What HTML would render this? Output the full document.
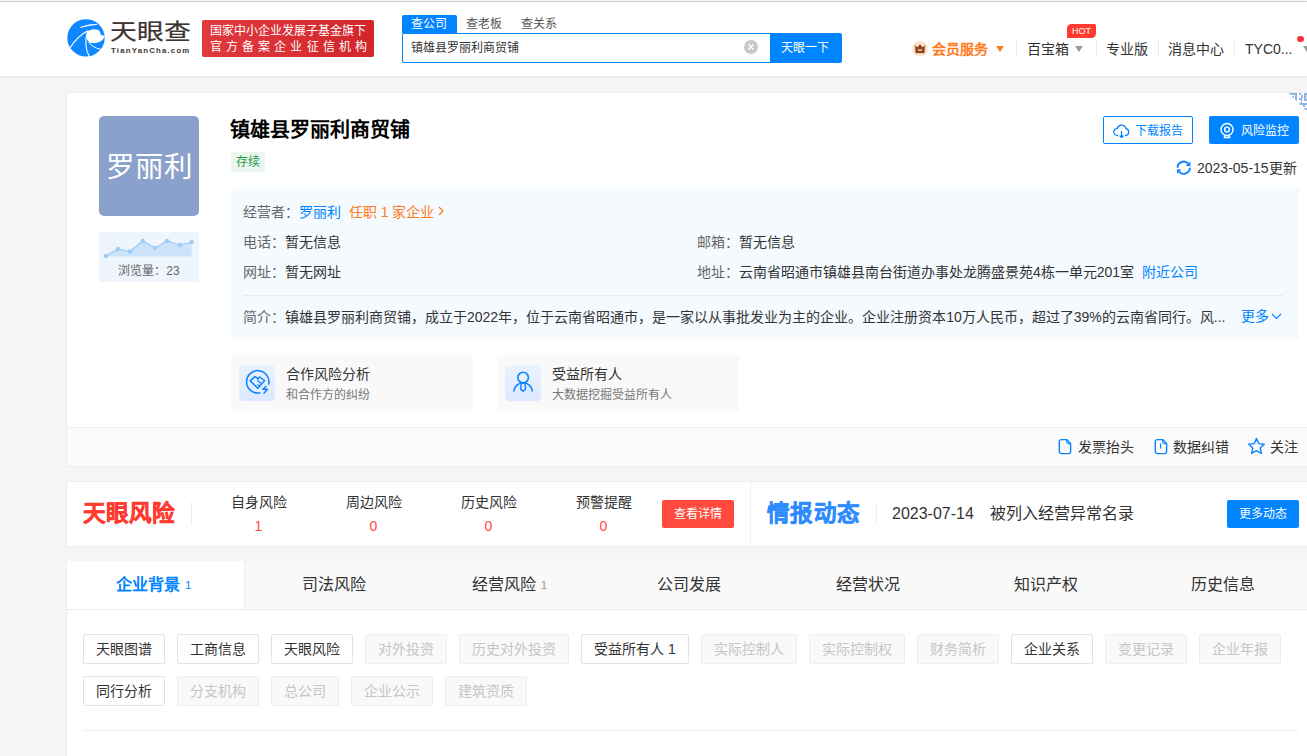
<!DOCTYPE html>
<html lang="zh-CN"><head><meta charset="utf-8">
<style>
*{box-sizing:border-box;margin:0;padding:0}
html,body{width:1307px;height:756px;overflow:hidden}
body{background:#f5f5f5;font-family:"Liberation Sans",sans-serif;color:#333;position:relative}
.abs{position:absolute}
.nw{white-space:nowrap}
#topline{left:0;top:1px;width:1307px;height:1px;background:#cfcfcf}
#header{left:0;top:2px;width:1307px;height:74px;background:#fff;box-shadow:0 1px 3px rgba(0,0,0,.08)}
.card{background:#fff;border:1px solid #eeeeee}
</style></head>
<body>
<div class="abs" style="left:0;top:0;width:1307px;height:1px;background:#fafafa"></div>
<div id="topline" class="abs"></div>
<div id="header" class="abs">
  <svg class="abs" style="left:62px;top:12px" width="50" height="48" viewBox="0 0 50 48">
    <circle cx="24" cy="23.9" r="18.7" fill="#0f88ff"/>
    <path d="M25.4 17.3 Q31 14.2 35.8 15.8 Q38.9 17.6 38.7 20.8 L42.8 22 Q41.6 26.6 35.8 28.5 Q30.5 29.8 27.3 28.2 Q24.6 26.2 24.6 23 Q24.8 19.5 25.4 17.3 Z" fill="#fff"/>
    <path d="M8.2 33.8 Q15 22.5 25.8 16.8" stroke="#fff" stroke-width="1.2" fill="none"/>
    <path d="M25.6 16.8 Q23.6 23 23.8 30 Q24.2 37 27.4 42.8" stroke="#fff" stroke-width="1.1" fill="none"/>
    <path d="M26.2 27.4 Q30 33.5 38.8 35.4" stroke="#fff" stroke-width="1" fill="none"/>
    <path d="M18.6 13.4 Q26 10.2 35 10.3 Q27 11.4 18.6 13.4 Z" stroke="#fff" stroke-width="0.7" fill="#fff"/>
  </svg>
  <div class="abs nw" style="left:110px;top:18.3px;font-size:26.8px;line-height:30px;color:#3d3532;-webkit-text-stroke:0.3px #3d3532;transform:scaleY(0.81);transform-origin:0 0;letter-spacing:0px">天眼查</div>
  <div class="abs nw" style="left:111px;top:43.5px;font-size:7.8px;line-height:10px;font-weight:bold;color:#3d3532;letter-spacing:1.2px">TianYanCha.com</div>
  <div class="abs" style="left:202px;top:18px;width:172px;height:37px;background:linear-gradient(90deg,#e03a3e,#d2262b);border-radius:2px"></div>
  <div class="abs nw" style="left:210px;top:21px;font-size:12px;line-height:16px;color:#fff">国家中小企业发展子基金旗下</div>
  <div class="abs nw" style="left:210px;top:37px;font-size:12px;line-height:16px;color:#fff;letter-spacing:4.1px">官方备案企业征信机构</div>

  <div class="abs" style="left:402px;top:13px;width:55px;height:18px;background:#0084ff;border-radius:2px 2px 0 0"></div>
  <div class="abs nw" style="left:411px;top:13px;font-size:12px;line-height:18px;color:#fff">查公司</div>
  <div class="abs nw" style="left:466px;top:13px;font-size:12px;line-height:18px;color:#555">查老板</div>
  <div class="abs nw" style="left:521px;top:13px;font-size:12px;line-height:18px;color:#555">查关系</div>
  <div class="abs" style="left:402px;top:31px;width:370px;height:30px;border:1px solid #0084ff;border-right:none;border-radius:2px 0 0 2px;background:#fff"></div>
  <div class="abs nw" style="left:411px;top:37px;font-size:12px;line-height:18px;color:#333">镇雄县罗丽利商贸铺</div>
  <svg class="abs" style="left:744px;top:38px" width="14" height="14" viewBox="0 0 14 14"><circle cx="7" cy="7" r="7" fill="#c8c8c8"/><path d="M4.3 4.3 L9.7 9.7 M9.7 4.3 L4.3 9.7" stroke="#fff" stroke-width="1.3"/></svg>
  <div class="abs" style="left:770px;top:31px;width:72px;height:30px;background:#0084ff;border-radius:0 2px 2px 0"></div>
  <div class="abs nw" style="left:781px;top:37px;font-size:12px;line-height:18px;color:#fff">天眼一下</div>

  <svg class="abs" style="left:912px;top:39px" width="16" height="16" viewBox="0 0 16 16"><circle cx="8" cy="7.9" r="7.9" fill="#fde4d1"/><path d="M3.1 4.6 L5.4 6.6 L8 3.5 L10.6 6.6 L12.9 4.6 L12.2 11.9 L3.8 11.9 Z" fill="#8e4513" stroke="#8e4513" stroke-width="0.4" stroke-linejoin="round"/><path d="M6.2 8 Q8 11.2 9.8 8" stroke="#fde4d1" stroke-width="1.1" fill="none"/></svg>
  <div class="abs nw" style="left:932px;top:36.5px;font-size:14px;line-height:20px;color:#ff7a1b;font-weight:bold">会员服务</div>
  <div class="abs" style="left:996px;top:43.5px;width:0;height:0;border-left:4.5px solid transparent;border-right:4.5px solid transparent;border-top:6px solid #ff7a1b"></div>
  <div class="abs" style="left:1016px;top:39px;width:1px;height:14px;background:#e8e8e8"></div>
  <div class="abs nw" style="left:1027px;top:36.5px;font-size:14px;line-height:20px;color:#333">百宝箱</div>
  <div class="abs" style="left:1075px;top:43.5px;width:0;height:0;border-left:4.5px solid transparent;border-right:4.5px solid transparent;border-top:6px solid #999"></div>
  <div class="abs" style="left:1067px;top:22px;width:29px;height:14px;background:#ff3a30;border-radius:4.5px 1.5px 4.5px 0"></div>
  <div class="abs nw" style="left:1067px;top:22px;width:29px;text-align:center;font-size:9px;line-height:14px;color:#fff">HOT</div>
  <div class="abs" style="left:1096px;top:39px;width:1px;height:14px;background:#e8e8e8"></div>
  <div class="abs nw" style="left:1106px;top:36.5px;font-size:14px;line-height:20px;color:#333">专业版</div>
  <div class="abs" style="left:1158px;top:39px;width:1px;height:14px;background:#e8e8e8"></div>
  <div class="abs nw" style="left:1168px;top:36.5px;font-size:14px;line-height:20px;color:#333">消息中心</div>
  <div class="abs" style="left:1234px;top:39px;width:1px;height:14px;background:#e8e8e8"></div>
  <div class="abs nw" style="left:1245px;top:36.5px;font-size:14px;line-height:20px;color:#333">TYC0...</div>
  <div class="abs" style="left:1297px;top:33.5px;width:6.5px;height:6.5px;border-radius:3.25px;background:#f5333f"></div>
  <div class="abs" style="left:1302.5px;top:44px;width:0;height:0;border-left:4.5px solid transparent;border-right:4.5px solid transparent;border-top:6px solid #999"></div>
</div>

<!-- main card -->
<div class="abs card" style="left:66px;top:92px;width:1251px;height:375px;"></div>
<div class="abs" style="left:67px;top:427px;width:1250px;height:39px;background:#fbfbfb;border-top:1px solid #efefef"></div>
<svg class="abs" style="left:1280px;top:88px" width="27" height="27" viewBox="0 0 27 27" shape-rendering="crispEdges">
  <defs><clipPath id="qc"><polygon points="8.6,5 27,5 27,23.5"/></clipPath></defs>
  <g fill="#8cb6e8" clip-path="url(#qc)">
  <rect x="8" y="5" width="9" height="1.8"/><rect x="15.3" y="5" width="1.6" height="8"/><rect x="11.8" y="7.9" width="2" height="2"/>
  <rect x="18.9" y="5" width="2.2" height="1.8"/><rect x="21" y="6.5" width="1.9" height="3"/><rect x="19.3" y="9.5" width="2.2" height="2.8"/><rect x="20.5" y="12" width="1.8" height="3"/>
  <rect x="24.3" y="5" width="2.7" height="7.5"/>
  <rect x="19.3" y="15" width="7.7" height="1.8"/><rect x="22.9" y="16.8" width="2.1" height="1.8"/><rect x="24.3" y="20" width="2.7" height="1.5"/>
  </g>
  <rect x="25.8" y="6.5" width="1.2" height="4.5" fill="#dff0ea"/>
</svg>
<div class="abs" style="left:99px;top:116px;width:100px;height:100px;background:#8aa1cc;border-radius:5px"></div>
<div class="abs nw" style="left:99px;top:117px;width:100px;text-align:center;font-size:28.5px;line-height:100px;color:#fff">罗丽利</div>
<div class="abs" style="left:99px;top:232px;width:100px;height:50px;background:#eef5fd"></div>
<svg class="abs" style="left:99px;top:232px" width="100" height="50" viewBox="0 0 100 50">
  <path d="M7 24 L19 17 L31 19.5 L43.7 9 L56 16 L68 9 L81 13 L92.6 10 L92.6 24.5 L7 24.5 Z" fill="#cce3fb"/>
  <path d="M7 24 L19 17 L31 19.5 L43.7 9 L56 16 L68 9 L81 13 L92.6 10" stroke="#9dccf6" stroke-width="1.2" fill="none"/>
  <g fill="#9dccf6"><circle cx="7" cy="24" r="2.2"/><circle cx="19" cy="17" r="2.2"/><circle cx="31" cy="19.5" r="2.2"/><circle cx="43.7" cy="9" r="2.2"/><circle cx="56" cy="16" r="2.2"/><circle cx="68" cy="9" r="2.2"/><circle cx="81" cy="13" r="2.2"/><circle cx="92.6" cy="10" r="2.2"/></g>
</svg>
<div class="abs nw" style="left:99px;top:262.5px;width:100px;text-align:center;font-size:12px;line-height:16px;color:#666">浏览量：23</div>

<div class="abs nw" style="left:230px;top:116px;font-size:20px;line-height:28px;font-weight:bold;color:#000">镇雄县罗丽利商贸铺</div>
<div class="abs" style="left:231px;top:152px;width:34px;height:20px;background:#eaf6ee;border-radius:2px"></div>
<div class="abs nw" style="left:231px;top:152px;width:34px;text-align:center;font-size:12px;line-height:20px;color:#1f9e48">存续</div>

<div class="abs" style="left:1103px;top:116px;width:90px;height:28px;border:1px solid #0084ff;border-radius:2px;background:#fff"></div>
<svg class="abs" style="left:1113px;top:122.5px" width="17" height="17" viewBox="0 0 17 17"><path d="M5 12.5 H4.5 A3.6 3.6 0 0 1 4.2 5.3 A4.6 4.6 0 0 1 13 5.6 A3.5 3.5 0 0 1 12.5 12.5 H12" stroke="#0084ff" stroke-width="1.3" fill="none"/><path d="M8.5 8 V14.5 M6.5 12.5 L8.5 14.5 L10.5 12.5" stroke="#0084ff" stroke-width="1.3" fill="none"/></svg>
<div class="abs nw" style="left:1135px;top:122px;font-size:12px;line-height:18px;color:#0084ff">下载报告</div>
<div class="abs" style="left:1209px;top:116px;width:90px;height:28px;background:#0084ff;border-radius:2px"></div>
<svg class="abs" style="left:1219px;top:121.5px" width="16" height="18" viewBox="0 0 16 18"><circle cx="8" cy="7.5" r="6" stroke="#fff" stroke-width="1.4" fill="none"/><circle cx="8" cy="7.5" r="2.4" stroke="#fff" stroke-width="1.4" fill="none"/><path d="M4.5 15.5 H11.5 M6 13 L5.5 15.5 M10 13 L10.5 15.5" stroke="#fff" stroke-width="1.4" fill="none"/></svg>
<div class="abs nw" style="left:1241px;top:122px;font-size:12px;line-height:18px;color:#fff">风险监控</div>
<svg class="abs" style="left:1176px;top:160px" width="16" height="16" viewBox="0 0 16 16"><path d="M1.5 7.7 A6.2 6.2 0 0 1 12.4 3.8" stroke="#0a84ff" stroke-width="1.9" fill="none"/><path d="M14.4 1.6 L14.4 6.2 L9.9 5.9 Z" fill="#0a84ff"/><path d="M13.9 7.7 A6.2 6.2 0 0 1 3 11.6" stroke="#0a84ff" stroke-width="1.9" fill="none"/><path d="M1 13.8 L1 9.3 L5.4 9.6 Z" fill="#0a84ff"/></svg>
<div class="abs nw" style="left:1197px;top:158px;font-size:14px;line-height:20px;color:#333">2023-05-15更新</div>

<div class="abs" style="left:231px;top:188px;width:1068px;height:151px;background:#f5faff"></div>
<div class="abs nw" style="left:243px;top:202px;font-size:14px;line-height:20px;color:#666">经营者：<span style="color:#0084ff">罗丽利</span>&nbsp;&nbsp;<span style="color:#ff7a1b">任职 1 家企业</span></div>
<svg class="abs" style="left:437px;top:205px" width="8" height="12" viewBox="0 0 8 12"><path d="M2 2 L6 6 L2 10" stroke="#ff7a1b" stroke-width="1.2" fill="none"/></svg>
<div class="abs nw" style="left:243px;top:232px;font-size:14px;line-height:20px;color:#666">电话：<span style="color:#333">暂无信息</span></div>
<div class="abs nw" style="left:243px;top:262px;font-size:14px;line-height:20px;color:#666">网址：<span style="color:#333">暂无网址</span></div>
<div class="abs nw" style="left:697px;top:232px;font-size:14px;line-height:20px;color:#666">邮箱：<span style="color:#333">暂无信息</span></div>
<div class="abs nw" style="left:697px;top:262px;font-size:14px;line-height:20px;color:#666">地址：<span style="color:#333">云南省昭通市镇雄县南台街道办事处龙腾盛景苑4栋一单元201室</span>&nbsp;&nbsp;<span style="color:#0084ff">附近公司</span></div>
<div class="abs" style="left:243px;top:295px;width:1040px;height:1px;background:#e4ebf3"></div>
<div class="abs nw" style="left:243px;top:307px;font-size:14px;line-height:20px;color:#666">简介：<span style="color:#333">镇雄县罗丽利商贸铺，成立于2022年，位于云南省昭通市，是一家以从事批发业为主的企业。企业注册资本10万人民币，超过了39%的云南省同行。风...</span></div>
<div class="abs nw" style="left:1241px;top:306px;font-size:14px;line-height:20px;color:#0084ff">更多</div>
<svg class="abs" style="left:1271px;top:311px" width="11" height="10" viewBox="0 0 11 10"><path d="M1 3 L5.5 7.5 L10 3" stroke="#0084ff" stroke-width="1.1" fill="none"/></svg>

<div class="abs" style="left:231px;top:355px;width:242px;height:56px;background:#f9f9f9"></div>
<div class="abs" style="left:239px;top:365px;width:36px;height:36px;background:linear-gradient(180deg,#ebf3ff,#dce8ff);border-radius:4px"></div>
<svg class="abs" style="left:239px;top:365px" width="36" height="36" viewBox="0 0 36 36"><path d="M29.6 19.6 A11.2 11.2 0 1 0 21.4 27.7" stroke="#0a84ff" stroke-width="1.5" fill="none"/><path d="M11.2 15.9 L15.9 11.6 L19 13.6 L20.6 12 L25.6 15.5 L18.8 23.3 Z" stroke="#0a84ff" stroke-width="1.5" fill="none" stroke-linejoin="round"/><path d="M19.8 13.2 Q17.6 14.8 19.5 16.5 L22.3 18.5 M18.5 19.5 L20.8 21.2" stroke="#0a84ff" stroke-width="1.2" fill="none"/><path d="M27.4 21 L23.9 24.2 L28.5 24.2 L24.6 28.4" stroke="#0a84ff" stroke-width="1.5" fill="none" stroke-linejoin="round"/></svg>
<div class="abs nw" style="left:286px;top:365px;font-size:14px;line-height:18px;color:#333">合作风险分析</div>
<div class="abs nw" style="left:286px;top:387px;font-size:12px;line-height:16px;color:#777">和合作方的纠纷</div>

<div class="abs" style="left:497px;top:355px;width:242px;height:56px;background:#f9f9f9"></div>
<div class="abs" style="left:505px;top:365px;width:36px;height:36px;background:linear-gradient(180deg,#ebf3ff,#dce8ff);border-radius:4px"></div>
<svg class="abs" style="left:505px;top:365px" width="36" height="36" viewBox="0 0 36 36"><circle cx="18.1" cy="12.6" r="5.3" stroke="#0a84ff" stroke-width="1.6" fill="none"/><path d="M9 26.6 A9.1 8.8 0 0 1 27.2 26.6" stroke="#0a84ff" stroke-width="1.6" fill="none"/><path d="M16.4 18.2 L19.8 18.2 L20.6 24.1 L18.1 26.2 L15.6 24.1 Z" stroke="#0a84ff" stroke-width="1.4" fill="#e4eeff" stroke-linejoin="round"/></svg>
<div class="abs nw" style="left:552px;top:365px;font-size:14px;line-height:18px;color:#333">受益所有人</div>
<div class="abs nw" style="left:552px;top:387px;font-size:12px;line-height:16px;color:#777">大数据挖掘受益所有人</div>

<svg class="abs" style="left:1057px;top:438px" width="16" height="17" viewBox="0 0 16 17"><path d="M4.3 1.6 H9.6 L13.6 5.6 V13.6 Q13.6 15.6 11.6 15.6 H4.3 Q2.3 15.6 2.3 13.6 V3.6 Q2.3 1.6 4.3 1.6 Z" stroke="#0a84ff" stroke-width="1.4" fill="none" stroke-linejoin="round"/><path d="M9.6 1.8 V3.8 Q9.6 5.6 11.4 5.6 H13.4" stroke="#0a84ff" stroke-width="1.1" fill="none"/></svg>
<div class="abs nw" style="left:1078px;top:437px;font-size:14px;line-height:20px;color:#333">发票抬头</div>
<svg class="abs" style="left:1153px;top:438px" width="16" height="17" viewBox="0 0 16 17"><path d="M4.3 1.6 H9.6 L13.6 5.6 V13.6 Q13.6 15.6 11.6 15.6 H4.3 Q2.3 15.6 2.3 13.6 V3.6 Q2.3 1.6 4.3 1.6 Z" stroke="#0a84ff" stroke-width="1.4" fill="none" stroke-linejoin="round"/><path d="M9.6 1.8 V3.8 Q9.6 5.6 11.4 5.6 H13.4" stroke="#0a84ff" stroke-width="1.1" fill="none"/><path d="M7.6 5.5 V10.5" stroke="#0a84ff" stroke-width="1.2"/></svg>
<div class="abs nw" style="left:1173px;top:437px;font-size:14px;line-height:20px;color:#333">数据纠错</div>
<svg class="abs" style="left:1247px;top:437px" width="19" height="19" viewBox="0 0 19 19"><path d="M9.5 1.5 L11.8 6.6 L17.3 7.2 L13.2 10.9 L14.4 16.4 L9.5 13.6 L4.6 16.4 L5.8 10.9 L1.7 7.2 L7.2 6.6 Z" stroke="#0a84ff" stroke-width="1.4" fill="none" stroke-linejoin="round"/></svg>
<div class="abs nw" style="left:1270px;top:437px;font-size:14px;line-height:20px;color:#333">关注</div>

<!-- risk card -->
<div class="abs card" style="left:66px;top:481px;width:685px;height:66px;"></div>
<div class="abs card" style="left:750px;top:481px;width:600px;height:66px;"></div>
<div class="abs nw" style="left:82.5px;top:500px;font-size:22.5px;line-height:28px;font-weight:bold;color:#ff3a2f;letter-spacing:0.3px;-webkit-text-stroke:0.45px #ff3a2f">天眼风险</div>
<div class="abs" style="left:191px;top:502px;width:1px;height:23px;background:#eee"></div>
<div class="abs nw" style="left:201px;top:493px;width:115px;text-align:center;font-size:14px;line-height:18px;color:#333">自身风险</div>
<div class="abs nw" style="left:201px;top:517px;width:115px;text-align:center;font-size:14px;line-height:18px;color:#ff4a3d">1</div>
<div class="abs nw" style="left:316px;top:493px;width:115px;text-align:center;font-size:14px;line-height:18px;color:#333">周边风险</div>
<div class="abs nw" style="left:316px;top:517px;width:115px;text-align:center;font-size:14px;line-height:18px;color:#ff4a3d">0</div>
<div class="abs nw" style="left:431px;top:493px;width:115px;text-align:center;font-size:14px;line-height:18px;color:#333">历史风险</div>
<div class="abs nw" style="left:431px;top:517px;width:115px;text-align:center;font-size:14px;line-height:18px;color:#ff4a3d">0</div>
<div class="abs nw" style="left:546px;top:493px;width:115px;text-align:center;font-size:14px;line-height:18px;color:#333">预警提醒</div>
<div class="abs nw" style="left:546px;top:517px;width:115px;text-align:center;font-size:14px;line-height:18px;color:#ff4a3d">0</div>
<div class="abs" style="left:662px;top:500px;width:72px;height:28px;background:#ff4a3d;border-radius:2px"></div>
<div class="abs nw" style="left:662px;top:500px;width:72px;text-align:center;font-size:12px;line-height:28px;color:#fff">查看详情</div>
<div class="abs nw" style="left:767px;top:500px;font-size:22.5px;line-height:28px;font-weight:bold;color:#2f8cff;letter-spacing:0.3px;-webkit-text-stroke:0.45px #2f8cff">情报动态</div>
<div class="abs" style="left:876px;top:502px;width:1px;height:23px;background:#eee"></div>
<div class="abs nw" style="left:892px;top:504px;font-size:16px;line-height:20px;color:#333">2023-07-14</div>
<div class="abs nw" style="left:990px;top:504px;font-size:16px;line-height:20px;color:#333">被列入经营异常名录</div>
<div class="abs" style="left:1227px;top:500px;width:72px;height:28px;background:#0084ff;border-radius:2px"></div>
<div class="abs nw" style="left:1227px;top:500px;width:72px;text-align:center;font-size:12px;line-height:28px;color:#fff">更多动态</div>

<!-- tabs card -->
<div class="abs card" style="left:66px;top:561px;width:1261px;height:220px;"></div>
<div class="abs" style="left:67px;top:561px;width:1250px;height:49px;background:#f9f9f9;border-bottom:1px solid #ececec"></div>
<div class="abs" style="left:67px;top:561px;width:178px;height:48px;background:#fff;border-right:1px solid #eee"></div>
<div class="abs nw" style="left:116.0px;top:574px;font-size:16px;line-height:22px;color:#0084ff;font-weight:bold">企业背景<span style="font-size:11.5px;font-weight:normal;color:#0084ff;margin-left:5px;position:relative;top:-1.5px">1</span></div>
<div class="abs nw" style="left:301.9px;top:574px;font-size:16px;line-height:22px;color:#333;font-weight:normal">司法风险</div>
<div class="abs nw" style="left:471.7px;top:574px;font-size:16px;line-height:22px;color:#333;font-weight:normal">经营风险<span style="font-size:11.5px;font-weight:normal;color:#999;margin-left:5px;position:relative;top:-1.5px">1</span></div>
<div class="abs nw" style="left:657.1px;top:574px;font-size:16px;line-height:22px;color:#333;font-weight:normal">公司发展</div>
<div class="abs nw" style="left:835.7px;top:574px;font-size:16px;line-height:22px;color:#333;font-weight:normal">经营状况</div>
<div class="abs nw" style="left:1013.5px;top:574px;font-size:16px;line-height:22px;color:#333;font-weight:normal">知识产权</div>
<div class="abs nw" style="left:1191.3px;top:574px;font-size:16px;line-height:22px;color:#333;font-weight:normal">历史信息</div>
<div class="abs nw" style="left:83px;top:634px;height:30px;padding:0 12px;font-size:14px;line-height:28px;border-radius:2px;border:1px solid #e3e3e3;background:#fff;color:#333">天眼图谱</div>
<div class="abs nw" style="left:177px;top:634px;height:30px;padding:0 12px;font-size:14px;line-height:28px;border-radius:2px;border:1px solid #e3e3e3;background:#fff;color:#333">工商信息</div>
<div class="abs nw" style="left:271px;top:634px;height:30px;padding:0 12px;font-size:14px;line-height:28px;border-radius:2px;border:1px solid #e3e3e3;background:#fff;color:#333">天眼风险</div>
<div class="abs nw" style="left:365px;top:634px;height:30px;padding:0 12px;font-size:14px;line-height:28px;border-radius:2px;border:1px solid #eee;background:#f9f9f9;color:#c5c5c5">对外投资</div>
<div class="abs nw" style="left:459px;top:634px;height:30px;padding:0 12px;font-size:14px;line-height:28px;border-radius:2px;border:1px solid #eee;background:#f9f9f9;color:#c5c5c5">历史对外投资</div>
<div class="abs nw" style="left:581px;top:634px;height:30px;padding:0 12px;font-size:14px;line-height:28px;border-radius:2px;border:1px solid #e3e3e3;background:#fff;color:#333">受益所有人 1</div>
<div class="abs nw" style="left:701px;top:634px;height:30px;padding:0 12px;font-size:14px;line-height:28px;border-radius:2px;border:1px solid #eee;background:#f9f9f9;color:#c5c5c5">实际控制人</div>
<div class="abs nw" style="left:809px;top:634px;height:30px;padding:0 12px;font-size:14px;line-height:28px;border-radius:2px;border:1px solid #eee;background:#f9f9f9;color:#c5c5c5">实际控制权</div>
<div class="abs nw" style="left:917px;top:634px;height:30px;padding:0 12px;font-size:14px;line-height:28px;border-radius:2px;border:1px solid #eee;background:#f9f9f9;color:#c5c5c5">财务简析</div>
<div class="abs nw" style="left:1011px;top:634px;height:30px;padding:0 12px;font-size:14px;line-height:28px;border-radius:2px;border:1px solid #e3e3e3;background:#fff;color:#333">企业关系</div>
<div class="abs nw" style="left:1105px;top:634px;height:30px;padding:0 12px;font-size:14px;line-height:28px;border-radius:2px;border:1px solid #eee;background:#f9f9f9;color:#c5c5c5">变更记录</div>
<div class="abs nw" style="left:1199px;top:634px;height:30px;padding:0 12px;font-size:14px;line-height:28px;border-radius:2px;border:1px solid #eee;background:#f9f9f9;color:#c5c5c5">企业年报</div>
<div class="abs nw" style="left:83px;top:676px;height:30px;padding:0 12px;font-size:14px;line-height:28px;border-radius:2px;border:1px solid #e3e3e3;background:#fff;color:#333">同行分析</div>
<div class="abs nw" style="left:177px;top:676px;height:30px;padding:0 12px;font-size:14px;line-height:28px;border-radius:2px;border:1px solid #eee;background:#f9f9f9;color:#c5c5c5">分支机构</div>
<div class="abs nw" style="left:271px;top:676px;height:30px;padding:0 12px;font-size:14px;line-height:28px;border-radius:2px;border:1px solid #eee;background:#f9f9f9;color:#c5c5c5">总公司</div>
<div class="abs nw" style="left:351px;top:676px;height:30px;padding:0 12px;font-size:14px;line-height:28px;border-radius:2px;border:1px solid #eee;background:#f9f9f9;color:#c5c5c5">企业公示</div>
<div class="abs nw" style="left:445px;top:676px;height:30px;padding:0 12px;font-size:14px;line-height:28px;border-radius:2px;border:1px solid #eee;background:#f9f9f9;color:#c5c5c5">建筑资质</div>
<div class="abs" style="left:83px;top:730px;width:1216px;height:1px;background:#eee"></div>

</body></html>
